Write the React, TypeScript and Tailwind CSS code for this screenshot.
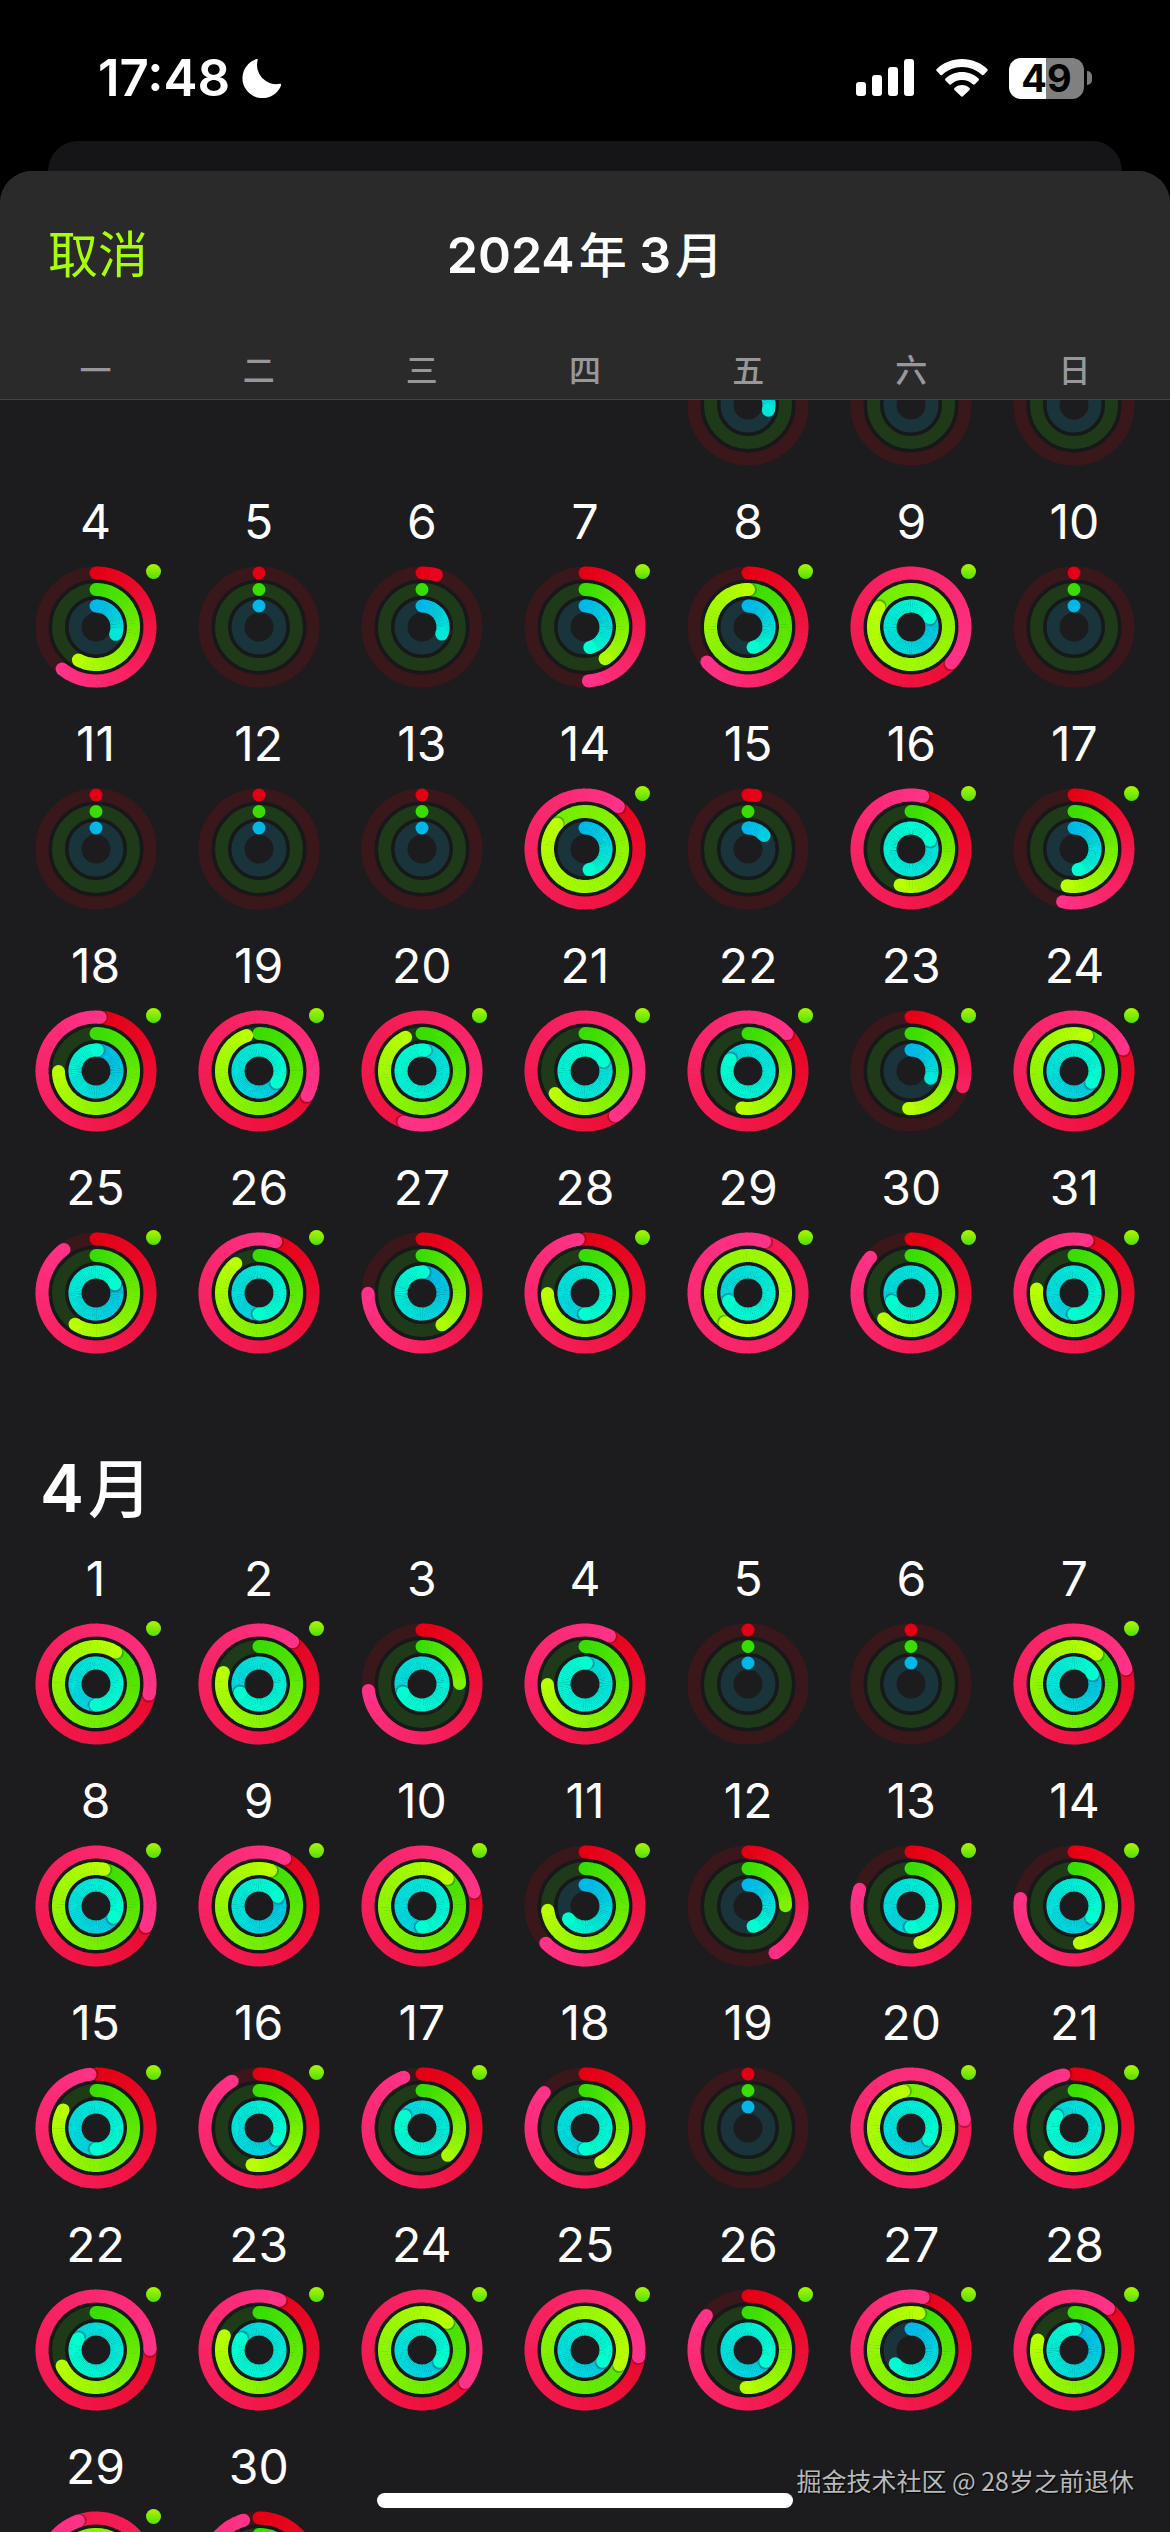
type Day = {
  day: number
  rings: [number, number, number]
  workout?: boolean
  // label has scrolled away under the header
  scrolled?: boolean
}

type Rgb = [number, number, number]

const weekdays = ['一', '二', '三', '四', '五', '六', '日']

// rings: move, exercise and stand, 1 = goal reached
const march: Day[] = [
  { day: 1, rings: [0, 0, 0.29], scrolled: true },
  { day: 2, rings: [0, 0, 0], scrolled: true },
  { day: 3, rings: [0, 0, 0], scrolled: true },
  { day: 4, rings: [0.608, 0.578, 0.307], workout: true },
  { day: 5, rings: [0, 0, 0] },
  { day: 6, rings: [0.043, 0, 0.305] },
  { day: 7, rings: [0.49, 0.41, 0.463], workout: true },
  { day: 8, rings: [0.638, 1.002, 0.461], workout: true },
  { day: 9, rings: [1.366, 1.837, 1.176], workout: true },
  { day: 10, rings: [0, 0, 0] },
  { day: 11, rings: [0, 0, 0] },
  { day: 12, rings: [0, 0, 0] },
  { day: 13, rings: [0, 0, 0] },
  { day: 14, rings: [1.106, 1.865, 0.469], workout: true },
  { day: 15, rings: [0.023, 0, 0.139] },
  { day: 16, rings: [1.035, 0.547, 2.18], workout: true },
  { day: 17, rings: [0.534, 0.53, 0.469], workout: true },
  { day: 18, rings: [1.012, 0.748, 1.01], workout: true },
  { day: 19, rings: [1.325, 0.947, 1.34], workout: true },
  { day: 20, rings: [1.554, 0.928, 2.02], workout: true },
  { day: 21, rings: [1.405, 0.647, 2.17], workout: true },
  { day: 22, rings: [1.128, 0.526, 1.84], workout: true },
  { day: 23, rings: [0.297, 0.51, 0.306], workout: true },
  { day: 24, rings: [1.183, 1.055, 1.34], workout: true },
  { day: 25, rings: [0.899, 0.594, 1.177], workout: true },
  { day: 26, rings: [1.05, 0.894, 1.5], workout: true },
  { day: 27, rings: [0.749, 0.411, 1.01] },
  { day: 28, rings: [0.98, 0.748, 1.5], workout: true },
  { day: 29, rings: [2.05, 2.604, 1.686], workout: true },
  { day: 30, rings: [0.865, 0.63, 1.683], workout: true },
  { day: 31, rings: [1.039, 0.767, 1.5], workout: true },
]

const april: Day[] = [
  { day: 1, rings: [1.28, 1.088, 1.5], workout: true },
  { day: 2, rings: [1.107, 0.8, 1.68], workout: true },
  { day: 3, rings: [0.731, 0.248, 1.68] },
  { day: 4, rings: [1.075, 0.748, 2.01] },
  { day: 5, rings: [0, 0, 0] },
  { day: 6, rings: [0, 0, 0] },
  { day: 7, rings: [1.205, 1.103, 1.17], workout: true },
  { day: 8, rings: [1.312, 1.034, 1.34], workout: true },
  { day: 9, rings: [1.079, 1.05, 1.175], workout: true },
  { day: 10, rings: [1.208, 1.118, 1.5], workout: true },
  { day: 11, rings: [0.629, 0.732, 0.645], workout: true },
  { day: 12, rings: [0.417, 0.249, 0.461] },
  { day: 13, rings: [0.8, 0.462, 1.5], workout: true },
  { day: 14, rings: [0.772, 0.477, 1.34], workout: true },
  { day: 15, rings: [0.982, 0.83, 1.5], workout: true },
  { day: 16, rings: [0.917, 0.53, 1.34], workout: true },
  { day: 17, rings: [0.945, 0.38, 1.845], workout: true },
  { day: 18, rings: [0.864, 0.431, 1.5] },
  { day: 19, rings: [0, 0, 0] },
  { day: 20, rings: [2.225, 1.968, 1.34], workout: true },
  { day: 21, rings: [0.97, 0.61, 1.845], workout: true },
  { day: 22, rings: [1.248, 0.68, 1.84], workout: true },
  { day: 23, rings: [1.063, 0.812, 1.84], workout: true },
  { day: 24, rings: [1.352, 1.118, 1.34], workout: true },
  { day: 25, rings: [1.27, 1.314, 1.34], workout: true },
  { day: 26, rings: [0.86, 0.508, 1.34], workout: true },
  { day: 27, rings: [1.036, 1.034, 0.636], workout: true },
  { day: 28, rings: [1.11, 0.793, 1.01], workout: true },
  { day: 29, rings: [1.947, 1.6, 1.34], workout: true },
  { day: 30, rings: [0.954, 0.5, 1.34] },
]

const ringStyles: { radius: number; track: string; from: Rgb; to: Rgb }[] = [
  { radius: 54, track: '#3a171b', from: [228, 0, 20], to: [255, 50, 135] },
  { radius: 37.5, track: '#1f3a18', from: [56, 222, 0], to: [184, 255, 0] },
  { radius: 21, track: '#19343b', from: [0, 184, 232], to: [0, 255, 208] },
]

function mix(from: Rgb, to: Rgb, t: number) {
  const [r, g, b] = from.map((c, i) => Math.round(c + (to[i] - c) * t))
  return `rgb(${r}, ${g}, ${b})`
}

function pointAt(turn: number, radius: number) {
  const angle = turn * Math.PI * 2
  return { x: Math.sin(angle) * radius, y: -Math.cos(angle) * radius }
}

function Ring({ value, radius, track, from, to }: { value: number; radius: number; track: string; from: Rgb; to: Rgb }) {
  // only the last full turn is visible
  const start = Math.max(0, value - 1)
  const count = Math.ceil((value - start) * 72)
  const step = count ? (value - start) / count : 0
  // short arcs never get to the bright end of the gradient
  const span = Math.max(value, 0.45)
  const tip = pointAt(value, radius)
  const shadow = pointAt(value + 2 / (radius * 6.28), radius)

  return (
    <g>
      <circle r={radius} stroke={track} strokeWidth="13" fill="none" />
      {value < 1 && <circle cx="0" cy={-radius} r="6.5" fill={mix(from, to, 0)} />}
      {Array.from({ length: count }, (_, i) => {
        const a = pointAt(start + i * step, radius)
        const b = pointAt(start + (i + 1) * step + (i < count - 1 ? 0.002 : 0), radius)
        return (
          <path
            key={i}
            d={`M${a.x} ${a.y}A${radius} ${radius} 0 0 1 ${b.x} ${b.y}`}
            stroke={mix(from, to, (start + (i + 0.5) * step) / span)}
            strokeWidth="13"
            fill="none"
          />
        )
      })}
      {value > 0.96 && <circle cx={shadow.x} cy={shadow.y} r="6.5" fill="#000" opacity="0.25" />}
      {value > 0 && <circle cx={tip.x} cy={tip.y} r="6.5" fill={mix(from, to, value / span)} />}
    </g>
  )
}

function ActivityRings({ rings }: { rings: Day['rings'] }) {
  return (
    <svg viewBox="-61 -61 122 122" className="size-[122px]" aria-hidden="true">
      <circle r="45.75" stroke="#17181a" strokeWidth="5" fill="none" />
      <circle r="29.25" stroke="#17181a" strokeWidth="5" fill="none" />
      {ringStyles.map((style, i) => (
        <Ring key={style.track} value={rings[i]} {...style} />
      ))}
    </svg>
  )
}

function MonthGrid({ days, offset }: { days: Day[]; offset: number }) {
  return (
    <div className="grid grid-cols-7 px-3.5">
      {Array.from({ length: offset }, (_, i) => (
        <span key={`blank-${i}`} />
      ))}
      {days.map(({ day, rings, workout, scrolled }) => (
        <button key={day} type="button" aria-label={`${day}日`} className="flex flex-col items-center gap-4 pb-7">
          <span className="h-14 text-[48px] leading-[56px]">{!scrolled && day}</span>
          <span className="relative">
            <ActivityRings rings={rings} />
            {workout && (
              <span className="absolute -top-0.5 -right-1 size-[15px] rounded-full bg-linear-to-b from-[#aaf600] to-[#4be000]" />
            )}
          </span>
        </button>
      ))}
    </div>
  )
}

function StatusBar() {
  return (
    <div className="flex h-[141px] items-start justify-between pt-[57px] pr-[78px] pl-[98px]">
      <div className="flex h-[42px] items-center gap-3">
        <span className="text-[51px] leading-[42px] font-semibold">17:48</span>
        <svg viewBox="0 0 40 40" className="size-10" fill="#fff" aria-hidden="true">
          <path d="M14.300 1.100c.8-.4 1.700.3 1.400 1.200a19 19 0 0 0 21.900 23.500c1.100-.2 1.900.7 1.500 1.600A20 20 0 1 1 14.300 1.100z" />
        </svg>
      </div>
      <div className="flex h-[42px] items-center">
        <svg viewBox="0 0 58 38" className="h-[38px] w-[58px]" fill="#fff" aria-hidden="true">
          <rect x="0" y="23" width="10" height="14" rx="3" />
          <rect x="16" y="16" width="10" height="21" rx="3" />
          <rect x="32" y="8" width="10" height="29" rx="3" />
          <rect x="48" y="0" width="10" height="37" rx="3" />
        </svg>
        <svg viewBox="0 0 52 38" className="ml-[22px] h-[38px] w-[52px]" fill="#fff" aria-hidden="true">
          <path d="M26 0C16.200 0 7.300 3.800.7 10c-.6.600-.6 1.500 0 2.100l3.500 3.600c.6.600 1.500.6 2.100 0C11.500 10.900 18.400 8 26 8s14.500 2.900 19.700 7.700c.6.600 1.500.600 2.100 0l3.500-3.600c.6-.6.6-1.500 0-2.100C44.700 3.800 35.800 0 26 0z" />
          <path d="M26 13c-6.400 0-12.200 2.500-16.500 6.500-.6.600-.6 1.500 0 2.100l3.600 3.600c.6.600 1.500.6 2.100 0C18 22.600 21.800 21 26 21s8 1.600 10.800 4.200c.6.600 1.500.6 2.100 0l3.600-3.600c.6-.6.6-1.500 0-2.100C38.200 15.500 32.400 13 26 13z" />
          <path d="M26 26c-2.900 0-5.500 1.100-7.500 2.900-.6.500-.6 1.400 0 2l6.500 6.400c.6.600 1.400.6 2 0l6.500-6.400c.6-.6.6-1.500 0-2C31.500 27.100 28.900 26 26 26z" />
        </svg>
        <span className="ml-[21px] flex h-[41px] w-[75px] items-center justify-center rounded-[12px] bg-linear-to-r from-white from-49% to-[#808080] to-49% text-[38px] leading-[41px] font-bold text-black">
          49
        </span>
        <span className="ml-[3px] h-[14px] w-[5px] rounded-r-full bg-[#7a7a7a]" />
      </div>
    </div>
  )
}

export default function App() {
  return (
    <main className="relative flex h-screen flex-col overflow-hidden bg-black font-[Inter,'Noto_Sans_CJK_SC',sans-serif] text-white">
      <StatusBar />
      <div className="mx-12 h-[30px] shrink-0 rounded-t-[30px] bg-[#151517]" />

      <section className="flex min-h-0 flex-1 flex-col overflow-hidden rounded-t-[32px] bg-[#1c1c1e]">
        <header className="shrink-0 border-b border-[#434345] bg-[#2a2a2b]">
          <div className="grid h-[168px] grid-cols-[1fr_auto_1fr] items-center px-12">
            <button type="button" className="justify-self-start text-[50px] leading-[60px] text-[#a8ff04]">
              取消
            </button>
            <h1 className="text-[50px] leading-[60px] font-semibold">
              2024<span className="ml-1 text-[48px] font-medium">年</span> 3
              <span className="ml-1 text-[48px] font-medium">月</span>
            </h1>
          </div>
          <div className="grid h-[60px] grid-cols-7 px-3.5 pt-2 text-center text-[32px] leading-[48px] font-medium text-[#98989b]">
            {weekdays.map((name) => (
              <span key={name}>{name}</span>
            ))}
          </div>
        </header>

        <div className="min-h-0 flex-1 overflow-hidden">
          {/* list is scrolled part way through the first week */}
          <div className="-mt-32">
            <MonthGrid days={march} offset={4} />
            <h2 className="h-[169px] px-10 pt-[66px] text-[66px] leading-[80px] font-semibold">
              4<span className="ml-1 text-[64px] font-medium">月</span>
            </h2>
            <MonthGrid days={april} offset={0} />
          </div>
        </div>
      </section>

      <div className="absolute bottom-6 left-1/2 h-[15px] w-[416px] -translate-x-1/2 rounded-full bg-white" />
      <p className="absolute right-9 bottom-[34px] font-['Noto_Sans_CJK_SC',sans-serif] text-[25px] leading-[36px] text-[#b9b9ba] text-shadow-[1px_1px_1px_#000]">
        掘金技术社区 @ 28岁之前退休
      </p>
    </main>
  )
}
